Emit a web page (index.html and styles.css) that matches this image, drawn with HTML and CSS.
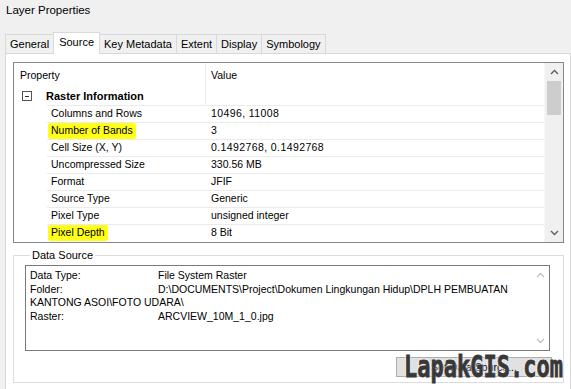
FILE: index.html
```html
<!DOCTYPE html>
<html lang="en">
<head>
    <meta charset="UTF-8">
    <title>Layer Properties</title>
    <link rel="stylesheet" href="styles.css">
</head>
<body>
    <div class="title">Layer Properties</div>

    <!-- tab strip -->
    <div class="tabs">
        <div class="tab">General</div>
        <div class="tab active">Source</div>
        <div class="tab">Key Metadata</div>
        <div class="tab">Extent</div>
        <div class="tab">Display</div>
        <div class="tab">Symbology</div>
    </div>

    <div class="page">
        <!-- property grid -->
        <div class="grid">
            <div class="grid-body">
                <div class="grid-head">
                    <div class="c1">Property</div>
                    <div class="c2">Value</div>
                </div>
                <div class="cat">
                    <span class="toggle"></span>
                    <span class="cat-name">Raster Information</span>
                </div>
                <div class="row"><div class="c1">Columns and Rows</div><div class="c2 num">10496, 11008</div></div>
                <div class="row"><div class="c1"><span class="mark">Number of Bands</span></div><div class="c2 num">3</div></div>
                <div class="row"><div class="c1">Cell Size (X, Y)</div><div class="c2 num">0.1492768, 0.1492768</div></div>
                <div class="row"><div class="c1">Uncompressed Size</div><div class="c2">330.56 MB</div></div>
                <div class="row"><div class="c1">Format</div><div class="c2">JFIF</div></div>
                <div class="row"><div class="c1">Source Type</div><div class="c2">Generic</div></div>
                <div class="row"><div class="c1">Pixel Type</div><div class="c2">unsigned integer</div></div>
                <div class="row"><div class="c1"><span class="mark">Pixel Depth</span></div><div class="c2">8 Bit</div></div>
            </div>
            <div class="vscroll">
                <svg class="arrow" width="9" height="6" viewBox="0 0 9 6"><path d="M1 5 L4.5 1.5 L8 5" fill="none" stroke="#606060" stroke-width="1.4"/></svg>
                <div class="thumb"></div>
                <div class="track"></div>
                <svg class="arrow" width="9" height="6" viewBox="0 0 9 6"><path d="M1 1 L4.5 4.5 L8 1" fill="none" stroke="#606060" stroke-width="1.4"/></svg>
            </div>
        </div>

        <!-- data source group -->
        <fieldset class="group">
            <legend>Data Source</legend>
            <div class="textbox">
                <div class="text">
                    <div><span class="lbl">Data Type:</span>File System Raster</div>
                    <div><span class="lbl">Folder:</span>D:\DOCUMENTS\Project\Dokumen Lingkungan Hidup\DPLH PEMBUATAN</div>
                    <div>KANTONG ASOI\FOTO UDARA\</div>
                    <div><span class="lbl">Raster:</span>ARCVIEW_10M_1_0.jpg</div>
                </div>
                <div class="vscroll off">
                    <svg class="arrow" width="9" height="6" viewBox="0 0 9 6"><path d="M1 5 L4.5 1.5 L8 5" fill="none" stroke="#c4c4c4" stroke-width="1.4"/></svg>
                    <div class="track"></div>
                    <svg class="arrow" width="9" height="6" viewBox="0 0 9 6"><path d="M1 1 L4.5 4.5 L8 1" fill="none" stroke="#c4c4c4" stroke-width="1.4"/></svg>
                </div>
            </div>
            <div class="actions">
                <button class="btn">Set Data Source...</button>
            </div>
        </fieldset>
    </div>

    <div class="watermark">LapakGIS.com</div>
</body>
</html>
```

FILE: styles.css
```css
/* window */
body {
    margin: 0;
    width: 571px;
    height: 389px;
    overflow: hidden;
    background: #f0f0f0;
    font-family: "Liberation Sans", Arial, sans-serif;
    font-size: 10.5px;
    color: #000;
    position: relative;
}

.title {
    height: 20px;
    line-height: 20px;
    padding-left: 6px;
    font-size: 11.5px;
}

/* tabs */
.tabs {
    display: flex;
    align-items: flex-end;
    margin-top: 12px;
    padding-left: 5px;
    position: relative;
    z-index: 1;
}
.tab {
    height: 18px;
    line-height: 18px;
    padding: 0 4px;
    border: 1px solid #d9d9d9;
    border-bottom: none;
    border-left: none;
    background: #f0f0f0;
    font-size: 11px;
}
.tab:first-child {
    border-left: 1px solid #d9d9d9;
}
.tab.active {
    height: 21px;
    line-height: 19px;
    background: #fff;
    border-left: 1px solid #d9d9d9;
    margin-left: -1px;
    margin-bottom: -1px;
    padding: 0 5px;
}

/* tab page */
.page {
    margin-left: 5px;
    width: 566px;
    height: 340px;
    box-sizing: border-box;
    border: 1px solid #d9d9d9;
    background: #fff;
    padding: 8px 0 0 7px;
}

/* property grid */
.grid {
    display: flex;
    width: 551px;
    height: 181px;
    box-sizing: border-box;
    border: 1px solid #828790;
}
.grid-body {
    flex: 1;
}
.grid-head {
    display: flex;
    height: 25px;
    line-height: 24px;
}
.grid-head .c1 {
    width: 185px;
    padding-left: 6px;
    border-right: 1px solid #ececec;
}
.grid-head .c2 {
    padding-left: 5px;
}
.cat {
    display: flex;
    align-items: center;
    height: 17px;
    box-sizing: border-box;
    padding-bottom: 2px;
    position: relative;
}
.cat::after {
    content: "";
    position: absolute;
    left: 191px;
    top: 0;
    bottom: 0;
    border-left: 1px solid #ececec;
}
.toggle {
    width: 8px;
    height: 8px;
    margin-left: 8px;
    border: 1px solid #555;
    position: relative;
}
.toggle::before {
    content: "";
    position: absolute;
    left: 2px;
    right: 2px;
    top: 4px;
    border-top: 1px solid #333;
}
.cat-name {
    margin-left: 14px;
    font-weight: bold;
    font-size: 11px;
}
.row {
    display: flex;
    height: 17px;
    line-height: 14px;
    margin-left: 33px;
    border-top: 1px solid #ebebeb;
    box-sizing: border-box;
}
.row .c1 {
    width: 154px;
    padding-left: 4px;
}
.row .c2 {
    padding-left: 6px;
}
.num {
    letter-spacing: 0.4px;
}
.mark {
    display: inline-block;
    line-height: 15px;
    background: #ffff1a;
    border-radius: 2px;
    padding: 0 3px 1px;
    margin-left: -3px;
}

/* scrollbars */
.vscroll {
    width: 18px;
    display: flex;
    flex-direction: column;
    align-items: center;
    background: #f0f0f0;
    border-left: 1px solid #f7f7f7;
}
.vscroll .arrow {
    margin: 6px 0;
}
.thumb {
    width: 14px;
    height: 34px;
    background: #cdcdcd;
}
.track {
    flex: 1;
}
.vscroll.off {
    width: 17px;
    background: #fff;
    border-left: none;
}

/* data source group */
.group {
    margin: 6px 0 0;
    width: 551px;
    box-sizing: border-box;
    border: 1px solid #dcdcdc;
    padding: 4px 13px 5px 11px;
}
.group legend {
    padding: 0 2px;
    margin-left: 5px;
    line-height: 12px;
    font-size: 11px;
}
.textbox {
    display: flex;
    height: 86px;
    box-sizing: border-box;
    border: 1px solid #7a7a7a;
}
.text {
    flex: 1;
    padding: 3px 4px;
    line-height: 13.5px;
}
.lbl {
    display: inline-block;
    width: 128px;
}
.actions {
    display: flex;
    justify-content: flex-end;
    margin: 6px -2px 0 0;
}
.btn {
    width: 156px;
    height: 20px;
    background: #e1e1e1;
    border: 1px solid #adadad;
    font-family: inherit;
    font-size: 10.5px;
    padding: 0;
}

/* watermark over the corner */
.watermark {
    position: absolute;
    left: 404px;
    top: 349px;
    font-family: "DejaVu Sans Mono", monospace;
    font-weight: bold;
    font-size: 22px;
    color: #383838;
    transform: scale(1, 1.4);
    transform-origin: left top;
    -webkit-text-stroke: 0.6px #383838;
    text-shadow: 0 0 2px #fff, 0 0 2px #fff;
}
```
